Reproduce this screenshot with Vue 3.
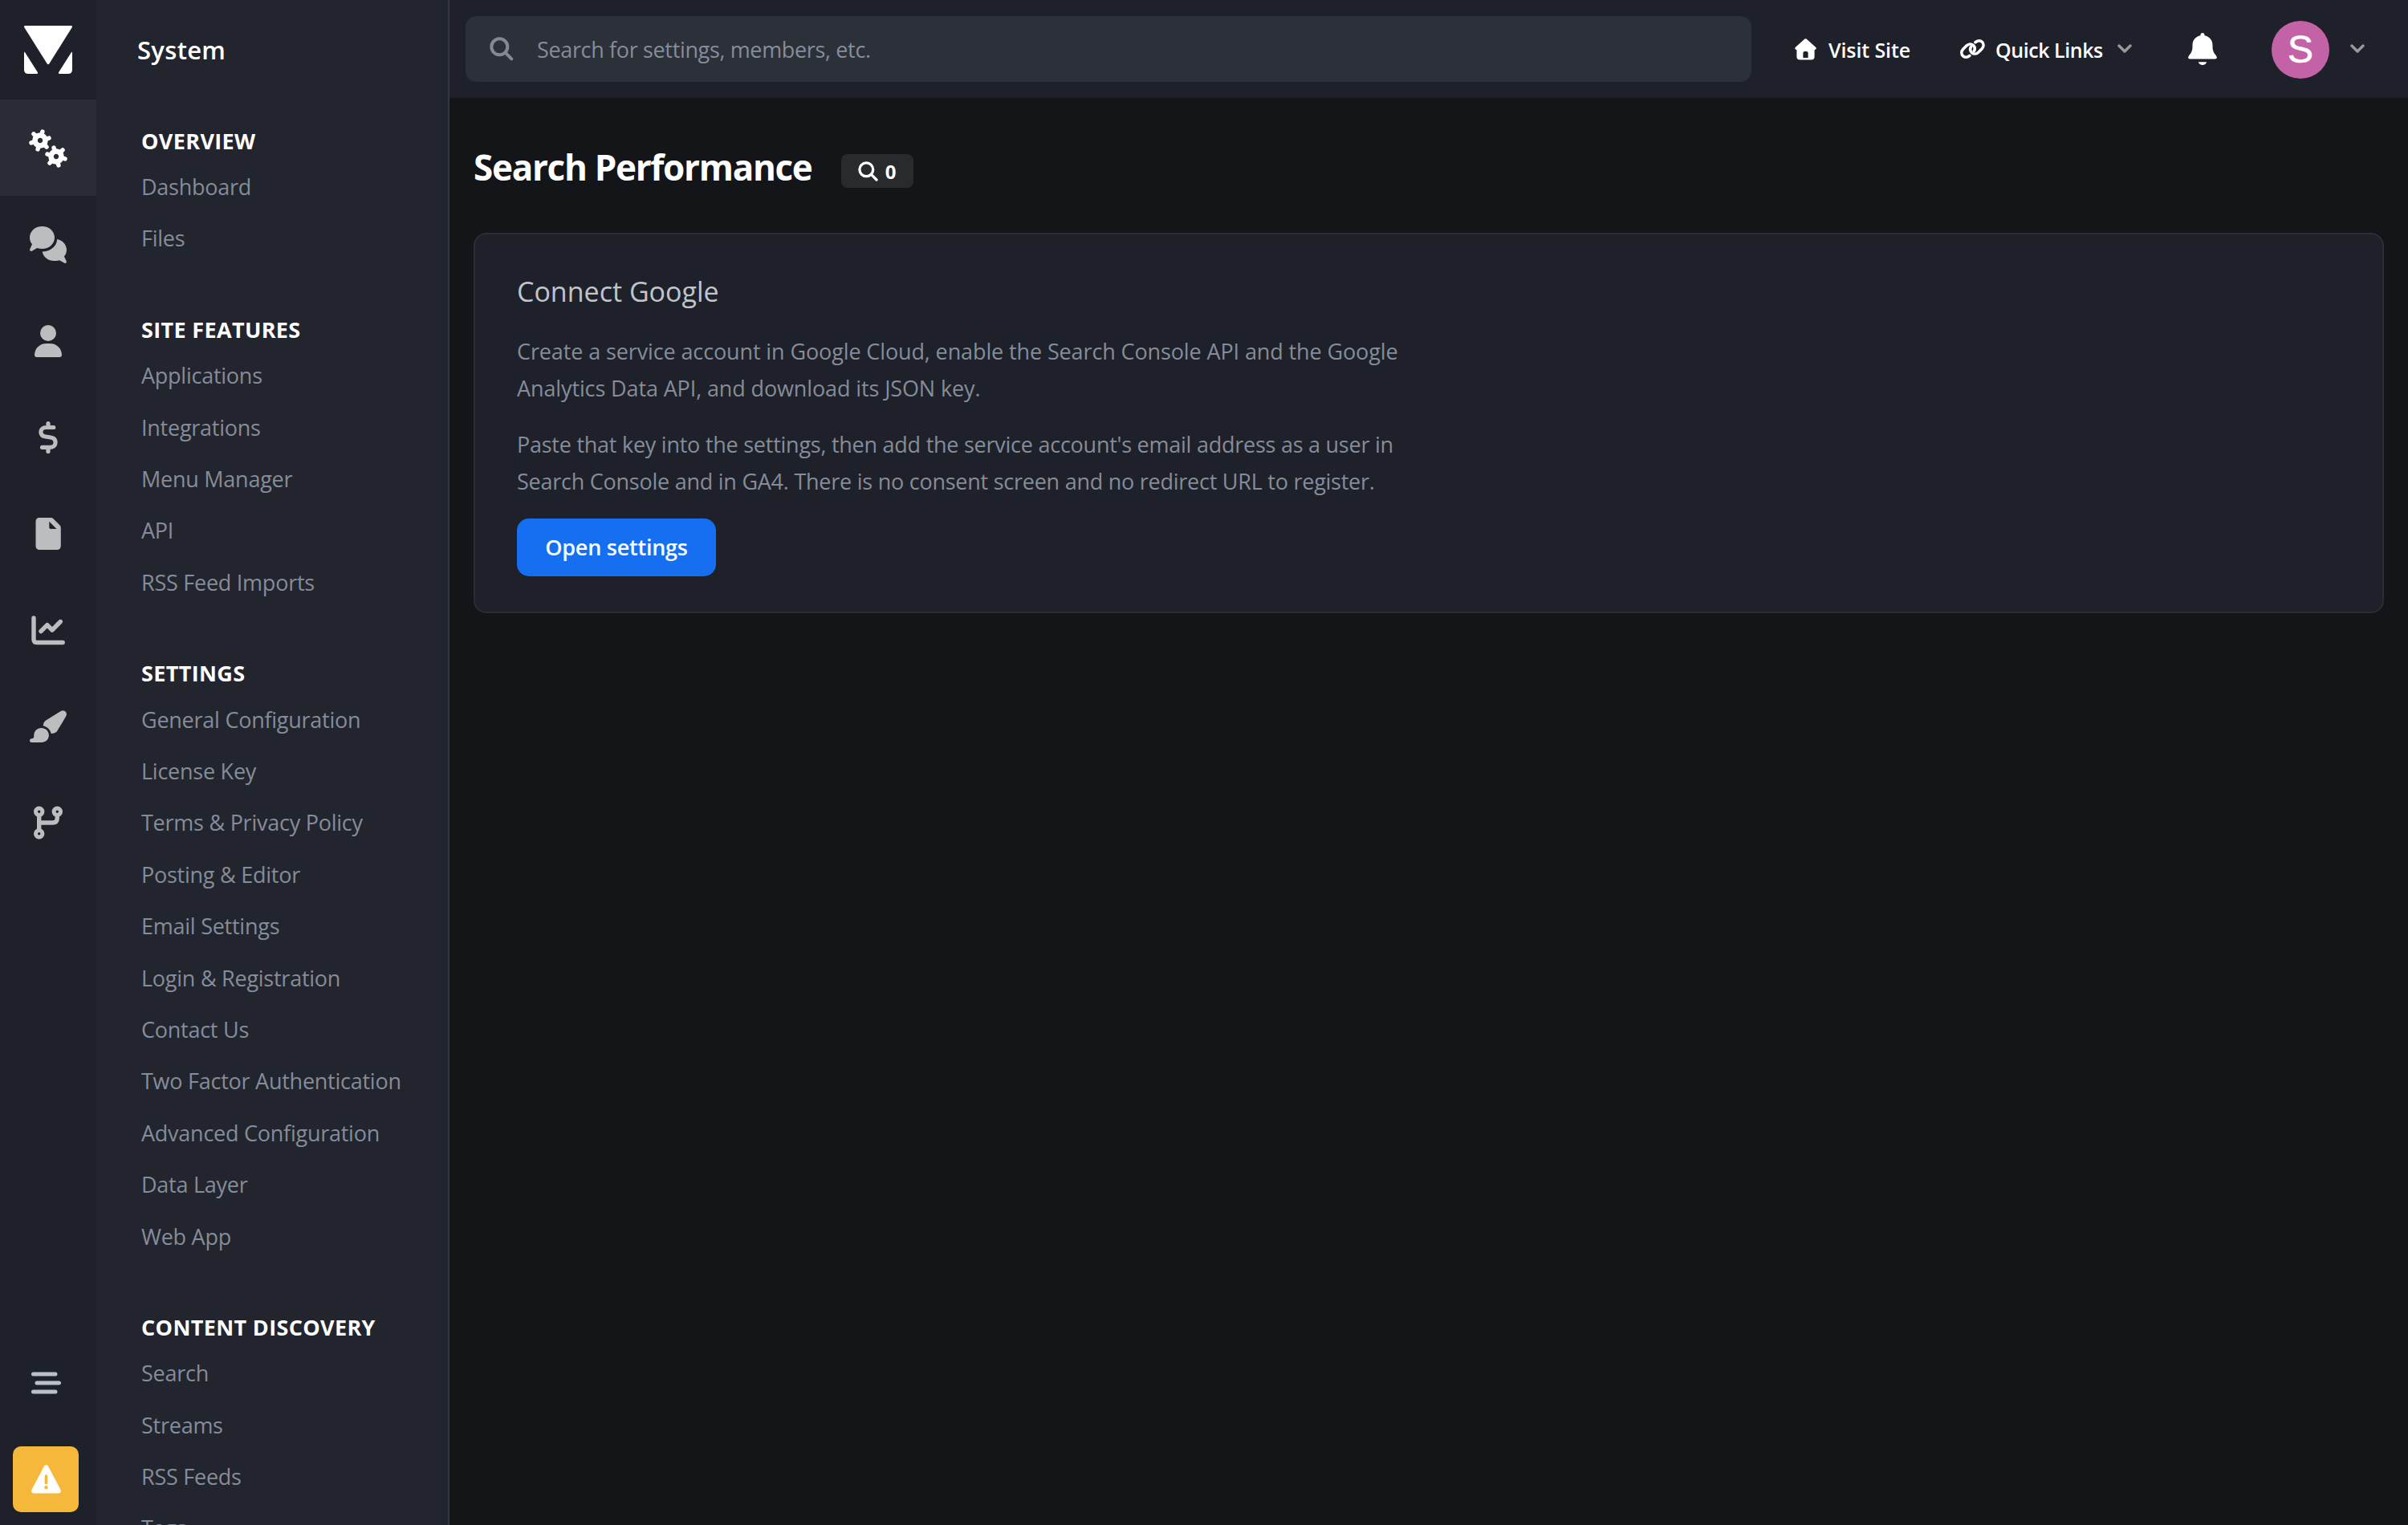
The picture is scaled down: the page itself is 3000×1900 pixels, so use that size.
<template>
  <div class="admin">
    <nav class="rail">
      <a class="logo" href="#">
        <svg width="60" height="60" viewBox="0 0 60 60" fill="#fff">
          <path d="M1.2 0H58.8Q60.4.2 59.8 2L31.4 47.2Q30 49.200 28.600 47.200L.2 2Q-.4.2 1.200 0Z" />
          <path d="M0 33.500Q.3 32 1.300 33.400L17 58.200Q17.600 59.700 16 60H5.500Q0 60 0 54.500Z" />
          <path d="M60 33.500Q59.700 32 58.700 33.400L43 58.200Q42.400 59.700 44 60H54.500Q60 60 60 54.500Z" />
        </svg>
      </a>
      <a
        v-for="item in railItems"
        :key="item"
        href="#"
        class="rail-item"
        :class="{ active: item === 'system' }"
      >
        <svg viewBox="0 0 120 120" fill="currentColor" stroke-linecap="round" stroke-linejoin="round">
          <g v-if="item === 'system'" fill="none" stroke="currentColor">
            <g v-for="gear in gears" :key="gear.x" :transform="`translate(${gear.x} ${gear.y})`">
              <circle r="6.5" stroke-width="6.600" />
              <path
                v-for="n in 6"
                :key="n"
                d="M8.500 0H11.400"
                stroke-width="5.400"
                :transform="`rotate(${gear.turn + n * 60})`"
              />
            </g>
          </g>
          <g v-else-if="item === 'community'">
            <path d="M52.500 38C61.300 38 68 44.200 68 52S61.300 66 52.500 66C50.300 66 48.200 65.700 46.200 65L39.800 68.700C38 69.500 36.600 67.900 37.300 66.200L40 60.200C38 57.900 37 55.100 37 52C37 44.200 43.700 38 52.500 38Z" />
            <path d="M71.100 54C78 55.300 83 60.800 83 67.300C83 70.500 81.900 73.300 79.900 75.500L82.700 81.300C83.400 83 82.200 84.500 80.300 83.700L74 80.200C71.900 80.800 69.800 81.100 67.500 81.100C60 81.100 54 76.400 52.700 69.600C63.200 69.500 71.100 62.300 71.100 54Z" />
          </g>
          <g v-else-if="item === 'members'">
            <circle cx="60" cy="51" r="10" />
            <path d="M43 78.600C43 70.300 49.300 64 57.600 64H62.400C70.700 64 77 70.300 77 78.600Q77 81 74.600 81H45.400Q43 81 43 78.600Z" />
          </g>
          <path
            v-else-if="item === 'commerce'"
            d="M60 43.500V48M60 74V78.500M66.800 48.500H57.500C53.500 48.500 50.900 51 50.900 54.200C50.900 57.600 53.400 59.500 56.800 60L63.200 61C66.800 61.600 69.100 63.900 69.100 67.200C69.100 70.700 66.400 73.300 62.500 73.300H52.500"
            fill="none"
            stroke="currentColor"
            stroke-width="5.200"
          />
          <path
            v-else-if="item === 'pages'"
            fill-rule="evenodd"
            d="M49.500 41H63.200Q65.200 41 66.600 42.400L74.400 50.200Q75.800 51.600 75.800 53.600V76Q75.800 81 70.800 81H49.500Q44.500 81 44.500 76V46Q44.500 41 49.500 41ZM61.300 45.800V53Q61.300 54.900 63.200 54.900H70.500Z"
          />
          <path
            v-else-if="item === 'stats'"
            d="M42 46V72.500Q42 76.500 46 76.500H78.200M51 62.500L58.800 54.600L65 61L75.300 50.500"
            fill="none"
            stroke="currentColor"
            stroke-width="5.400"
          />
          <g v-else-if="item === 'customization'">
            <path d="M76.200 41.800C79.700 39.600 84.400 43.300 82.600 47.500C81.500 50 75 60.500 71.600 66.200C70 68.900 67.600 69.900 63.700 70C62.600 65 59 61.500 53.800 60.200C53.800 57.200 54.700 55.200 57.600 53.200Z" />
            <path d="M51.500 63C56.800 63 60.900 66.900 60.900 72C60.900 77.200 56.800 81 51.500 81H39.500C36.200 81 36.200 76.200 39.500 76.200C42 76.200 42.400 74.500 42.300 72C42.300 66.900 46.300 63 51.500 63Z" />
          </g>
          <g v-else fill="none" stroke="currentColor" stroke-width="5">
            <circle cx="48.700" cy="47.200" r="4.200" />
            <circle cx="71.300" cy="47.200" r="4.200" />
            <circle cx="48.700" cy="74.800" r="4.200" />
            <path d="M48.700 53V69M48.700 61H65.500Q71.300 61 71.300 55V53" stroke-width="5.400" />
          </g>
        </svg>
      </a>
      <div class="rail-bottom">
        <svg width="38" height="28" viewBox="0 0 38 28" stroke="#bbbfca" stroke-width="5" stroke-linecap="round">
          <path d="M3.500 3H31M8 14H35.500M3.500 25H31" />
        </svg>
        <a class="warning" href="#">
          <svg width="38" height="36" viewBox="-.5 0 38 36">
            <path d="M16.600 1.500Q19 -1 21.400 1.500L37 31Q38.200 35 34.500 35.500H3.500Q-.2 35 1 31Z" fill="#fff" />
            <path d="M19 14V22.500" stroke="#f5b83a" stroke-width="3.600" stroke-linecap="round" />
            <circle cx="19" cy="28.300" r="2.200" fill="#f5b83a" />
          </svg>
        </a>
      </div>
    </nav>

    <aside class="sidebar">
      <div class="sidebar-title">System</div>
      <section v-for="group in groups" :key="group.title">
        <h4>{{ group.title }}</h4>
        <ul>
          <li v-for="link in group.links" :key="link">
            <a href="#">{{ link }}</a>
          </li>
        </ul>
      </section>
    </aside>

    <div class="page">
      <header>
        <div class="search">
          <svg width="30" height="30" viewBox="0 0 30 30" fill="none" stroke="#858891" stroke-width="4" stroke-linecap="round">
            <circle cx="12.300" cy="12.300" r="10" />
            <path d="M19.800 19.800L27.300 27.300" />
          </svg>
          <span>Search for settings, members, etc.</span>
        </div>
        <a class="top-link visit" href="#">
          <svg width="27" height="27" viewBox="0 0 27 27" fill="#fff">
            <path
              fill-rule="evenodd"
              d="M12.400.6Q13.500 -.3 14.600.6L26.300 11Q27.600 13 25.300 14H24.600V22.500Q24.600 26.500 20.600 26.500H6.400Q2.400 26.500 2.400 22.500V14H1.700Q-.6 13 .7 11ZM12.500 16Q10.400 16 10.400 18.100V24H16.600V18.100Q16.600 16 14.500 16Z"
            />
          </svg>
          <span>Visit Site</span>
        </a>
        <a class="top-link quick" href="#">
          <svg width="31" height="24" viewBox="0 0 31 24" fill="none" stroke="#fff" stroke-width="3.600" stroke-linecap="round">
            <path d="M11.800 20.400C9 22.800 5.500 22.700 3.500 20.700C1.200 18.400 1.400 14.800 3.700 12.300L8.200 7.800C10.700 5.400 14.200 5.300 16.500 7.600C18.400 9.600 18.700 12.400 17.300 14.700" />
            <path d="M19 3.700C21.800 1.200 25.300 1.300 27.400 3.300C29.700 5.600 29.500 9.200 27.200 11.700L22.700 16.200C20.200 18.600 16.700 18.700 14.400 16.400C12.500 14.400 12.200 11.600 13.600 9.300" />
          </svg>
          <span>Quick Links</span>
          <svg class="chevron" width="18" height="12" viewBox="0 0 18 12"><path d="M2 2L9 9L16 2" /></svg>
        </a>
        <svg class="bell" width="36" height="40" viewBox="0 0 36 40" fill="#fff">
          <path d="M15.500 2.500C15.500 -.8 20.500 -.8 20.500 2.500V3.200C26.500 4.300 30.500 9 30.500 15V17.500C30.500 21.500 31.800 24.600 34.500 27.800L35.300 28.900C36.700 31 35.500 32.500 33.500 32.500H2.500C.5 32.500 -.7 31 .7 28.900L1.500 27.800C4.200 24.600 5.500 21.500 5.500 17.500V15C5.500 9 9.500 4.300 15.500 3.200Z" />
          <path d="M12.800 36.200H23.200Q21.800 40 18 40T12.800 36.200Z" />
        </svg>
        <div class="avatar">S</div>
        <svg class="chevron" width="18" height="12" viewBox="0 0 18 12"><path d="M2 2L9 9L16 2" /></svg>
      </header>

      <main>
        <div class="heading">
          <h1>Search Performance</h1>
          <span class="badge">
            <svg width="25" height="25" viewBox="0 0 25 25" fill="none" stroke="#fff" stroke-width="3.300" stroke-linecap="round">
              <circle cx="10.300" cy="10.300" r="8.400" />
              <path d="M16.700 16.700L23 23" />
            </svg>
            0
          </span>
        </div>
        <div class="card">
          <h2>Connect Google</h2>
          <p>
            Create a service account in Google Cloud, enable the Search Console API and the Google
            Analytics Data API, and download its JSON key.
          </p>
          <p>
            Paste that key into the settings, then add the service account's email address as a user in
            Search Console and in GA4. There is no consent screen and no redirect URL to register.
          </p>
          <button>Open settings</button>
        </div>
      </main>
    </div>
  </div>
</template>

<script setup>
const railItems = [
  "system",
  "community",
  "members",
  "commerce",
  "pages",
  "stats",
  "customization",
  "developer",
];

const gears = [
  { x: 50, y: 51, turn: -15 },
  { x: 70, y: 71, turn: 15 },
];

const groups = [
  { title: "OVERVIEW", links: ["Dashboard", "Files"] },
  {
    title: "SITE FEATURES",
    links: ["Applications", "Integrations", "Menu Manager", "API", "RSS Feed Imports"],
  },
  {
    title: "SETTINGS",
    links: [
      "General Configuration",
      "License Key",
      "Terms & Privacy Policy",
      "Posting & Editor",
      "Email Settings",
      "Login & Registration",
      "Contact Us",
      "Two Factor Authentication",
      "Advanced Configuration",
      "Data Layer",
      "Web App",
    ],
  },
  { title: "CONTENT DISCOVERY", links: ["Search", "Streams", "RSS Feeds", "Tags"] },
];
</script>

<style>
body {
  background: #141518;
  overflow: hidden;
}
</style>

<style scoped>
.admin {
  display: flex;
  width: 3000px;
  height: 1900px;
  overflow: hidden;
  font-family: "Open Sans", "Noto Sans", sans-serif;
  font-size: 27px;
  letter-spacing: -0.250px;
  color: #858c9a;
  white-space: nowrap;
}

a {
  color: inherit;
  text-decoration: none;
}

svg {
  display: block;
  flex-shrink: 0;
}

h1,
h2,
h4,
p,
ul {
  margin: 0;
  padding: 0;
}

/* icon rail */
.rail {
  display: flex;
  flex-direction: column;
  flex-shrink: 0;
  width: 120px;
  background: #1e2129;
}

.logo {
  display: flex;
  align-items: center;
  justify-content: center;
  height: 124px;
}

.rail-item {
  height: 120px;
  color: #bcbdbf;
}

.rail-item.active {
  background: #2a2c35;
  color: #fff;
}

.rail-bottom {
  display: flex;
  flex-direction: column;
  align-items: center;
  gap: 65px;
  width: 114px;
  margin-top: auto;
  padding-bottom: 16px;
}

.warning {
  display: flex;
  align-items: center;
  justify-content: center;
  width: 82px;
  height: 82px;
  border-radius: 10px;
  background: #f5b83a;
}

/* section menu */
.sidebar {
  flex-shrink: 0;
  box-sizing: border-box;
  width: 440px;
  padding-left: 56px;
  border-right: 2px solid #343840;
  background: #22252d;
}

.sidebar-title {
  height: 124px;
  margin: 0 0 30.500px -5px;
  line-height: 124px;
  font-size: 31px;
  font-weight: 600;
  letter-spacing: 0.3px;
  color: #fff;
}

section {
  margin-bottom: 59.800px;
}

h4 {
  margin-bottom: 4.600px;
  line-height: 42px;
  font-size: 27px;
  font-weight: 700;
  letter-spacing: 0.350px;
  color: #fff;
}

ul {
  list-style: none;
}

li {
  height: 64.400px;
  line-height: 64.400px;
}

/* top bar */
.page {
  flex-grow: 1;
  min-width: 0;
}

header {
  display: flex;
  align-items: center;
  box-sizing: border-box;
  height: 122px;
  padding: 0 54px 0 20px;
  background: #1e2129;
}

.search {
  display: flex;
  align-items: center;
  box-sizing: border-box;
  gap: 29px;
  width: 1602px;
  height: 82px;
  padding-left: 30px;
  border-radius: 14px;
  background: #2c3038;
  letter-spacing: -0.350px;
}

.search span {
  padding-top: 1px;
}

.top-link {
  display: flex;
  align-items: center;
  font-size: 25px;
  font-weight: 600;
  color: #fff;
}

.top-link span {
  padding-top: 2px;
}

.visit {
  gap: 15px;
  width: 206px;
  margin-left: 54px;
  letter-spacing: -0.100px;
}

.quick {
  gap: 13px;
  width: 214px;
  letter-spacing: -0.450px;
}

.chevron {
  margin-left: auto;
  fill: none;
  stroke: #97999d;
  stroke-width: 3.400;
  stroke-linecap: round;
  stroke-linejoin: round;
}

.bell {
  margin-left: 70px;
}

.avatar {
  width: 72px;
  height: 72px;
  margin: 2px 0 0 68px;
  border-radius: 50%;
  background: #c462a8;
  line-height: 72px;
  text-align: center;
  font-family: "Liberation Sans", sans-serif;
  font-size: 48px;
  color: #fff;
  -webkit-text-stroke: 0.6px #fff;
}

/* content */
main {
  padding: 0 30px;
}

.heading {
  display: flex;
  align-items: center;
  gap: 36px;
  height: 168px;
}

h1 {
  padding-top: 3px;
  font-size: 44px;
  font-weight: 700;
  letter-spacing: -1.300px;
  color: #fff;
}

.badge {
  display: flex;
  align-items: center;
  justify-content: center;
  gap: 9px;
  width: 90px;
  height: 42px;
  margin-top: 14px;
  border-radius: 8px;
  background: #272b2e;
  font-size: 24px;
  font-weight: 700;
  color: #fff;
}

.card {
  box-sizing: border-box;
  height: 474px;
  padding: 46px 52px 43px;
  border: 2px solid #2a2d34;
  border-radius: 16px;
  background: #1e2129;
}

h2 {
  margin-bottom: 26.500px;
  line-height: 50px;
  font-size: 34px;
  font-weight: 400;
  letter-spacing: 0;
  color: #c1c5cb;
}

p {
  max-width: 1150px;
  line-height: 46px;
  letter-spacing: -0.120px;
  white-space: normal;
}

p + p {
  margin-top: 24.500px;
  letter-spacing: -0.250px;
}

button {
  width: 248px;
  height: 72px;
  margin-top: 23px;
  padding: 0 0 1px;
  border: 0;
  border-radius: 15px;
  background: #156ff0;
  font: inherit;
  font-weight: 600;
  letter-spacing: -0.250px;
  color: #fff;
}
</style>
